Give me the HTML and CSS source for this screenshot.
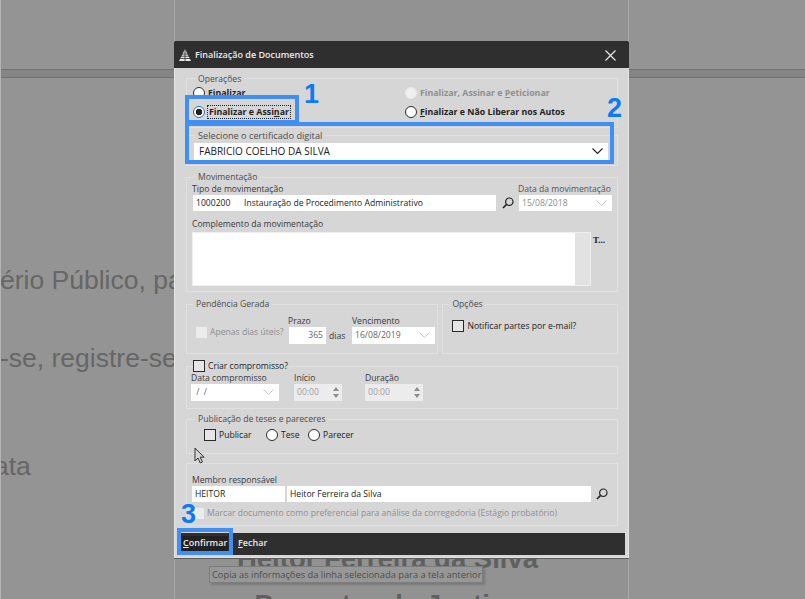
FILE: index.html
```html
<!DOCTYPE html>
<html lang="pt-BR">
<head>
<meta charset="utf-8">
<title>Finalização de Documentos</title>
<link rel="stylesheet" href="styles.css">
</head>
<body>
<div class="page">
  <div class="side side-left">
    <div class="band"></div>
    <p class="bgtext line1">ério Público, para ciência</p>
    <p class="bgtext line2">-se, registre-se e intime-se</p>
    <p class="bgtext line3">ata</p>
  </div>
  <div class="center">
    <p class="signer">Heitor Ferreira da Silva</p>
    <p class="role">Promotor de Justiça</p>
  </div>
  <div class="side side-right">
    <div class="band"></div>
  </div>

  <div class="tooltip">Copia as informações da linha selecionada para a tela anterior</div>

  <section class="dialog">
    <header class="titlebar">
      <svg class="logo" viewBox="0 0 12 12" width="12" height="12"><path d="M6 0 12 12H0Z" fill="#e8e8e8"/><path d="M0 9.5h12M0 7.2h12M2 5h8" stroke="#2f2f2f" stroke-width=".8"/><path d="M6 0v12" stroke="#2f2f2f" stroke-width=".8"/></svg>
      <span class="title">Finalização de Documentos</span>
      <svg class="close" viewBox="0 0 11 11" width="11" height="11"><path d="M.5.5l10 10M10.5.5l-10 10" stroke="#f0f0f0" stroke-width="1.1" fill="none"/></svg>
    </header>

    <div class="content">
      <div class="group ops">
        <div class="legend">Operações</div>
        <div class="ops-grid">
          <label class="opt bold"><i class="radio"></i><span>Finalizar</span></label>
          <label class="opt bold off"><i class="radio blank"></i><span>Finalizar, Assinar e <u>P</u>eticionar</span></label>
          <label class="opt bold"><i class="radio on"></i><span class="focus">Finalizar e Assi<u>n</u>ar</span></label>
          <label class="opt bold"><i class="radio"></i><span><u>F</u>inalizar e Não Liberar nos Autos</span></label>
        </div>
      </div>

      <div class="group cert">
        <div class="legend">Selecione o certificado digital</div>
        <div class="field select-cert">
          <span>FABRICIO COELHO DA SILVA</span>
          <svg class="chev" viewBox="0 0 11 6" width="11" height="6"><path d="M.5.5l5 5 5-5" stroke="#222" stroke-width="1.1" fill="none"/></svg>
        </div>
      </div>

      <div class="group mov">
        <div class="legend">Movimentação</div>
        <div class="mov-grid">
          <div class="lbl span2">Tipo de movimentação</div>
          <div></div>
          <div class="lbl dim">Data da movimentação</div>
          <div class="field">1000200</div>
          <div class="field desc">Instauração de Procedimento Administrativo</div>
          <svg class="lens" viewBox="0 0 12 12" width="12" height="12"><circle cx="7.3" cy="4.7" r="3.7" stroke="#222" stroke-width="1.2" fill="none"/><path d="M4.6 7.4 1 11" stroke="#222" stroke-width="1.6"/></svg>
          <div class="field muted">15/08/2018<svg class="chev" viewBox="0 0 11 6" width="11" height="6"><path d="M.5.5l5 5 5-5" stroke="#c8c8c8" stroke-width="1" fill="none"/></svg></div>
        </div>
        <div class="lbl compl">Complemento da movimentação</div>
        <div class="compl-row">
          <div class="textarea"><div class="scroll"></div></div>
          <span class="tmark">T...</span>
        </div>
      </div>

      <div class="row-2">
        <div class="group pend">
          <div class="legend">Pendência Gerada</div>
          <div class="pend-grid">
            <label class="check-line off"><i class="check blank"></i>Apenas dias úteis?</label>
            <div class="stack prazo">
              <div class="lbl">Prazo</div>
              <div class="inline"><div class="field tall num muted2">365</div><span class="dias">dias</span></div>
            </div>
            <div class="stack">
              <div class="lbl">Vencimento</div>
              <div class="field tall venc muted2">16/08/2019<svg class="chev" viewBox="0 0 11 6" width="11" height="6"><path d="M.5.5l5 5 5-5" stroke="#c8c8c8" stroke-width="1" fill="none"/></svg></div>
            </div>
          </div>
        </div>
        <div class="group opcoes">
          <div class="legend">Opções</div>
          <label class="check-line notify"><i class="check"></i>Notificar partes por e-mail?</label>
        </div>
      </div>

      <div class="group comp">
        <label class="check-line comp-check"><i class="check"></i>Criar compromisso?</label>
        <div class="comp-grid">
          <div class="stack">
            <div class="lbl">Data compromisso</div>
            <div class="field tall date-c">&nbsp;/&nbsp;&nbsp;/<svg class="chev" viewBox="0 0 11 6" width="11" height="6"><path d="M.5.5l5 5 5-5" stroke="#c8c8c8" stroke-width="1" fill="none"/></svg></div>
          </div>
          <div class="stack">
            <div class="lbl">Início</div>
            <div class="spin s1">00:00<span class="arrows"><b class="up"></b><b class="down"></b></span></div>
          </div>
          <div class="stack">
            <div class="lbl">Duração</div>
            <div class="spin s2">00:00<span class="arrows"><b class="up"></b><b class="down"></b></span></div>
          </div>
        </div>
      </div>

      <div class="group pub">
        <div class="legend">Publicação de teses e pareceres</div>
        <div class="pub-row">
          <label class="check-line"><i class="check"></i>Publicar</label>
          <label class="opt tese"><i class="radio"></i><span>Tese</span></label>
          <label class="opt"><i class="radio"></i><span>Parecer</span></label>
        </div>
      </div>

      <div class="group membro">
        <div class="lbl">Membro responsável</div>
        <div class="membro-grid">
          <div class="field">HEITOR</div>
          <div class="field">Heitor Ferreira da Silva</div>
          <svg class="lens" viewBox="0 0 12 12" width="12" height="12"><circle cx="7.3" cy="4.7" r="3.7" stroke="#222" stroke-width="1.2" fill="none"/><path d="M4.6 7.4 1 11" stroke="#222" stroke-width="1.6"/></svg>
        </div>
        <label class="check-line off pref"><i class="check blank"></i>Marcar documento como preferencial para análise da corregedoria (Estágio probatório)</label>
      </div>
    </div>

    <footer class="footer">
      <span class="btn btn-active"><u>C</u>onfirmar</span>
      <span class="btn"><u>F</u>echar</span>
    </footer>
  </section>

  <div class="mark mark1"></div>
  <div class="mark mark2"></div>
  <div class="mark mark3"></div>
  <span class="num-tag n1">1</span>
  <span class="num-tag n2">2</span>
  <span class="num-tag n3">3</span>

  <svg class="cursor" viewBox="0 0 12 18" width="12" height="18"><path d="M1 1v13l3-3 2.2 5 2.2-1-2.2-4.8H10Z" fill="#d6d6d6" stroke="#333" stroke-width="1"/></svg>
</div>
</body>
</html>
```

FILE: styles.css
```css
* { box-sizing: border-box; }
html, body { margin: 0; padding: 0; }
body { width: 805px; height: 599px; overflow: hidden; background: #949494; font-family: "Open Sans", "Liberation Sans", sans-serif; }
p { margin: 0; }

.page { position: relative; width: 805px; height: 599px; display: flex; overflow: hidden; }

.side { overflow: hidden; background: #949494; }
.side-left { width: 174px; border-left: 1px solid #b4b4b4; }
.side-right { flex: 1; }
.center { width: 455px; background: #929292; border-left: 1px solid #a8a8a8; border-right: 1px solid #a8a8a8; overflow: hidden; text-align: center; font-family: "Liberation Sans", sans-serif; font-weight: 700; color: #606060; font-size: 27.5px; line-height: 30px; padding: 544px 28px 0 0; white-space: nowrap; }
.role { margin-top: 16px; }

.band { height: 9px; margin-top: 69px; background: #858585; border-top: 1px solid #717171; border-bottom: 1px solid #717171; }

.bgtext { font-family: "Liberation Sans", sans-serif; font-size: 26.5px; line-height: 28px; color: #666; white-space: nowrap; }
.line1 { margin-top: 188px; margin-left: -1px; }
.line2 { margin-top: 50px; margin-left: -1px; }
.line3 { margin-top: 80px; margin-left: -7px; }

.tooltip { position: absolute; left: 209px; top: 566px; width: 274px; height: 17px; border: 1px solid #7d7d7d; background: #979797; box-shadow: 2px 2px 2px #7a7a7a; font-size: 9.3px; line-height: 15px; color: #4d4d4d; padding-left: 2px; white-space: nowrap; }

.dialog { position: absolute; left: 174px; top: 41px; width: 455px; height: 517px; background: #d6d6d6; border: 1px solid #e6e6e6; border-top-color: #2f2f2f; border-bottom-color: #e0e0e0; box-shadow: 0 1px #5c5c5c; display: flex; flex-direction: column; font-size: 8.6px; line-height: 12px; color: #222; }

.titlebar { height: 26px; flex: none; background: #2f2f2f; display: flex; align-items: center; padding: 0 13px 0 5px; color: #ececec; margin: 0 -1px; }
.logo { flex: none; }
.title { margin-left: 4px; font-size: 9px; font-weight: 600; }
.close { margin-left: auto; }

.content { flex: 1; display: flex; flex-direction: column; padding: 10px 10px 0 11px; }

.group { border: 1px solid #e0e0e0; }
.legend { width: fit-content; height: 12px; margin: -7px 0 0 8px; padding: 0 3px; background: #d6d6d6; color: #4c4c4c; }
.lbl { color: #3a3a3a; white-space: nowrap; }
.lbl.dim { color: #555; margin-left: -1px; }

.field { position: relative; height: 16px; background: #fff; line-height: 16px; padding-left: 3px; white-space: nowrap; overflow: hidden; }
.field.tall { height: 17px; line-height: 17px; }
.muted { color: #8d8d8d; }
.muted2 { color: #666; }
.chev { position: absolute; right: 5px; top: 5px; }

.radio { flex: none; display: block; width: 12px; height: 12px; border-radius: 50%; border: 1.5px solid #2c2c2c; background: #fff; }
.radio.blank { border-color: #e8e8e8; background: #f0f0f0; }
.radio.on { border-color: #2f6fb0; background: radial-gradient(circle, #222 0 3px, #fff 3.6px); }
.check { flex: none; display: block; width: 12px; height: 12px; border: 1.5px solid #2a2a2a; background: #e6e6e6; }
.check.blank { border: none; background: #ececec; width: 11px; height: 11px; }

.opt { display: flex; align-items: center; gap: 3px; white-space: nowrap; }
.bold { font-weight: 700; font-size: 8.8px; }
.off { color: #8f8f8f; }
.focus { outline: 1px dotted #222; padding: 0 1px; }
.check-line { display: flex; align-items: center; gap: 3px; white-space: nowrap; }

.ops { height: 50px; }
.ops .legend { margin-top: -6px; }
.ops-grid { display: grid; grid-template-columns: 212px 1fr; grid-auto-rows: 19px; padding-left: 6px; margin-top: -2px; align-items: center; }

.cert { height: 31px; margin-top: 7px; }
.cert .legend { margin-top: -6px; font-size: 9.2px; }
.select-cert { width: 414px; height: 17px; line-height: 17px; margin: 1px 0 0 7px; padding-left: 5px; font-size: 10px; }

.mov { height: 115px; margin-top: 11px; padding-left: 5px; }
.mov .legend { margin-left: 3px; }
.mov-grid { display: grid; grid-template-columns: 50px 253px 23px 93px; padding-left: 1px; }
.mov-grid .span2 { grid-column: span 2; margin-left: -1px; }
.mov-grid > .field:first-of-type { margin-right: 2px; }
.mov-grid .desc { padding-left: 1px; }
.mov-grid .lens { align-self: center; justify-self: center; }
.compl { margin-top: 7px; }
.compl-row { display: flex; margin-top: 2px; }
.textarea { width: 399px; height: 54px; background: #fff; border: 1px solid #eee; display: flex; justify-content: flex-end; }
.scroll { width: 15px; background: #e2e2e2; }
.tmark { margin: 2px 0 0 2px; font-family: "Liberation Serif", serif; font-weight: 700; font-size: 9px; }

.row-2 { display: flex; gap: 4px; margin-top: 12px; }
.pend { width: 253px; height: 50px; }
.pend .legend { margin-left: 6px; }
.pend-grid { display: flex; padding: 5px 0 0 9px; }
.pend-grid .check-line { margin-top: 11px; align-self: flex-start; width: 92px; }
.stack { display: flex; flex-direction: column; gap: 0; }
.inline { display: flex; align-items: center; }
.num { width: 37px; margin-left: 1px; text-align: right; padding-right: 3px; }
.dias { margin-left: 3px; color: #3a3a3a; }
.prazo { width: 64px; }
.venc { width: 83px; }
.opcoes { width: 176px; height: 50px; }
.opcoes .legend { margin-left: 6px; }
.notify { margin: 10px 0 0 9px; }

.comp { height: 43px; margin-top: 12px; padding-left: 4px; }
.comp-check { margin: -7px 0 0 2px; height: 12px; }
.comp-grid { display: flex; margin-top: 0; }
.comp-grid .stack:first-child { width: 103px; }
.comp-grid .stack:nth-child(2) { width: 71px; }
.date-c { width: 88px; color: #666; }
.spin { position: relative; height: 17px; line-height: 17px; background: #ececec; color: #a0a0a0; padding-left: 3px; }
.s1 { width: 48px; }
.s2 { width: 58px; }
.arrows { position: absolute; right: 3px; top: 3px; display: flex; flex-direction: column; gap: 3px; }
.arrows b { display: block; width: 0; height: 0; border-left: 3px solid transparent; border-right: 3px solid transparent; }
.up { border-bottom: 4px solid #8e8e8e; }
.down { border-top: 4px solid #8e8e8e; }

.pub { height: 35px; margin-top: 10px; }
.pub-row { display: flex; align-items: center; padding: 4px 0 0 17px; }
.pub-row .check-line { width: 62px; }
.tese { width: 42px; }

.membro { height: 63px; margin-top: 9px; padding: 10px 0 0 5px; }
.membro-grid { display: grid; grid-template-columns: 95px 304px 22px; }
.membro-grid .field:first-child { margin-right: 2px; }
.membro-grid .lens { align-self: center; justify-self: center; }
.pref { margin: 5px 0 0 1px; }

.footer { flex: none; height: 22px; margin: 7px 3px 3px 2px; background: #2f2f2f; color: #eaeaea; display: flex; align-items: center; padding-left: 5px; gap: 9px; font-size: 9px; }
.btn { font-weight: 600; padding: 1px 1px 3px; }
.btn-active { width: 46px; background: #222; white-space: nowrap; }

.mark { position: absolute; border: 4px solid #418ff3; pointer-events: none; }
.mark1 { left: 185px; top: 95px; width: 114px; height: 29px; }
.mark2 { left: 185px; top: 122px; width: 429px; height: 42px; }
.mark3 { left: 177px; top: 528px; width: 56px; height: 27px; }
.num-tag { position: absolute; font-family: "Liberation Sans", sans-serif; font-weight: 700; font-size: 27px; line-height: 27px; color: #0b7bf5; }
.n1 { left: 304px; top: 81px; }
.n2 { left: 607px; top: 95px; }
.n3 { left: 181px; top: 501px; }

.cursor { position: absolute; left: 194px; top: 447px; }
```
